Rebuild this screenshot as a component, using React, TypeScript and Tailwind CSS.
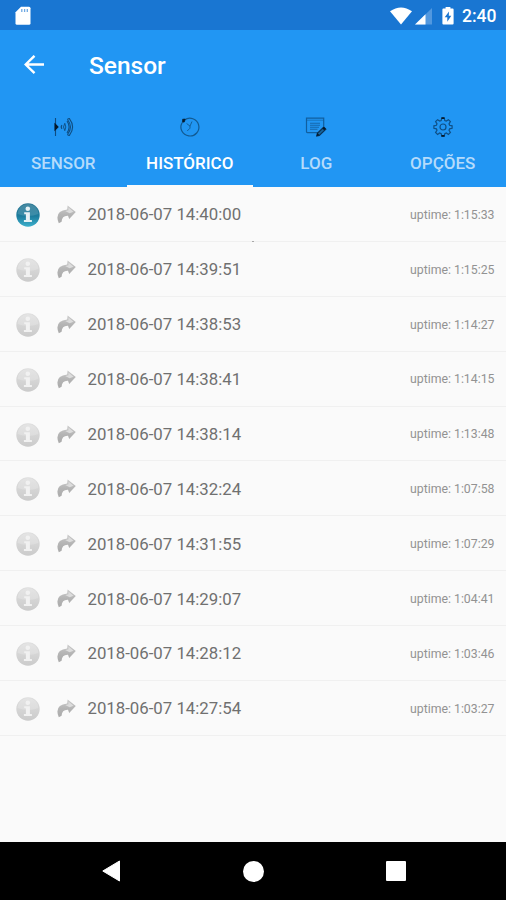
import { useState } from "react";
import type { ReactNode } from "react";

const records = [
  { date: "2018-06-07 14:40:00", uptime: "1:15:33" },
  { date: "2018-06-07 14:39:51", uptime: "1:15:25" },
  { date: "2018-06-07 14:38:53", uptime: "1:14:27" },
  { date: "2018-06-07 14:38:41", uptime: "1:14:15" },
  { date: "2018-06-07 14:38:14", uptime: "1:13:48" },
  { date: "2018-06-07 14:32:24", uptime: "1:07:58" },
  { date: "2018-06-07 14:31:55", uptime: "1:07:29" },
  { date: "2018-06-07 14:29:07", uptime: "1:04:41" },
  { date: "2018-06-07 14:28:12", uptime: "1:03:46" },
  { date: "2018-06-07 14:27:54", uptime: "1:03:27" },
];

const SensorIcon = () => (
  <svg width="22" height="22" viewBox="0 0 22 22" fill="none" stroke="#0f4d80" strokeWidth="1.1">
    <path d="M3.5 2v18" />
    <path d="M3 8l3 3-3 3z" fill="#05192b" stroke="#05192b" />
    <path d="M10 9.2q-1.6 1.8 0 3.6" />
    <path d="M12.8 7.3q-2.6 3.7 0 7.4M12.8 7.3q2 3.700 0 7.400" strokeWidth=".9" />
    <path d="M15 5q4.200 6 0 12" />
    <path d="M17.400 2.600q6.400 8.400 0 16.800q-2 .2-1.600-1.400q5.300-7 0-14q-.4-1.600 1.600-1.400z" />
  </svg>
);

const HistoryIcon = () => (
  <svg width="22" height="22" viewBox="0 0 22 22" fill="none" stroke="#125a92" strokeWidth="1.2">
    <path d="M5.5 4a9 8.9 0 1 1-2.4 2.7" />
    <path d="M3.6 3.2 6.2 3l-.8 3-2 .3z" fill="#05192b" stroke="#05192b" strokeWidth=".6" />
    <path d="m7.6 7.5 3.4 2.6 2-4.6M11 10v2.2L8.2 15" strokeWidth=".9" />
  </svg>
);

const LogIcon = () => (
  <svg width="22" height="22" viewBox="0 0 22 22" fill="none" stroke="#115f9f" strokeWidth="1.2">
    <path d="M13 16.6H2.5q-1 0-1-1V2.2h17.2v8.3" />
    <path d="M1.5 4.2h17.2" strokeWidth=".6" />
    <path d="M5 7.2h10M5 9.2h10M5 11.2h9M5 13.2h7.5" stroke="#1668ad" strokeWidth="1.1" />
    <path d="m12.4 17.2 6.4-6 2 2-6.5 6.2-2.5.6z" stroke="#0b3459" fill="#17679f" />
    <path d="m12.4 17-.9 3 3-.7zM17.3 12.2l1.8 2 1.7-1.4-1.9-1.8z" fill="#05192b" stroke="none" />
  </svg>
);

const GearIcon = () => (
  <svg width="22" height="22" viewBox="0 0 22 22" fill="none" stroke="#0f4f85" strokeWidth="1.2">
    <path d="M9.7 2h2.6l.5 2.5 1.5.6 2.1-1.4 2 2L17 7.8l.6 1.5 2.5.5v2.5l-2.5.5-.6 1.5 1.4 2.1-2 2-2.1-1.4-1.5.6-.5 2.5H9.7l-.5-2.5-1.5-.6-2.1 1.4-2-2L5 14.3l-.6-1.5-2.5-.5V9.8l2.5-.5L5 7.8 3.6 5.7l2-2 2.1 1.4 1.5-.6z" />
    <circle cx="11" cy="11" r="3" />
    <path d="M9.5 2.2h3M9.5 19.8h3" stroke="#05192b" strokeWidth="1.8" />
  </svg>
);

const tabs = [
  { label: "SENSOR", icon: <SensorIcon /> },
  { label: "HISTÓRICO", icon: <HistoryIcon /> },
  { label: "LOG", icon: <LogIcon /> },
  { label: "OPÇÕES", icon: <GearIcon /> },
];

function InfoIcon({ active }: { active: boolean }) {
  const id = active ? "info-on" : "info-off";
  return (
    <svg width="24" height="24" viewBox="0 0 24 24">
      <defs>
        <linearGradient id={id} x1="0" y1="0" x2="0" y2="1">
          <stop offset="0" stopColor={active ? "#2b7793" : "#dedede"} />
          <stop offset=".55" stopColor={active ? "#1c7c9d" : "#d4d4d4"} />
          <stop offset="1" stopColor={active ? "#3db0cc" : "#cbcbcb"} />
        </linearGradient>
      </defs>
      <circle cx="12" cy="12" r="11.7" fill={`url(#${id})`} />
      <path d="M1.5 11a10.5 10 0 0 1 21 0q-10.5 4-21 0z" fill="#fff" opacity={active ? 0.13 : 0.2} />
      <g fill={active ? "#e6f1f5" : "#f1f1f1"}>
        <circle cx="11.8" cy="5.8" r="2.3" />
        <path d="M8.2 9.2h5.7v7.8h2v2H7.9v-2h2v-5.8H8.2z" />
      </g>
    </svg>
  );
}

const ShareIcon = () => (
  <svg width="20" height="20" viewBox="0 0 20 20">
    <defs>
      <linearGradient id="share" x1="0" y1="0" x2="0" y2="1">
        <stop offset="0" stopColor="#cacaca" />
        <stop offset=".5" stopColor="#b5b5b5" />
        <stop offset="1" stopColor="#aaa" />
      </linearGradient>
    </defs>
    <path d="M11.6.4 19.8 7l-6.600 6.900-1.200-3.200Q5.800 10.400 5.600 16.800L2.800 18.200Q-2.300 6.200 11.200 4.500z" fill="url(#share)" />
    <path d="m12.400 2.600 5.200 4.200-4 1.500-4.400-2.300 3.200-.8z" fill="#dcdcdc" />
  </svg>
);

function StatusBar() {
  return (
    <div className="flex h-[30px] shrink-0 items-center bg-[#1976d2] pt-px pr-[9px] pl-[15px] text-white">
      <svg width="16" height="20" viewBox="0 0 16 20">
        <path d="M6 .8h8q1.5 0 1.5 1.5v15q0 1.5-1.5 1.5H2q-1.5 0-1.5-1.5v-11z" fill="#fff" />
        <path d="M6.8 3v3M9.6 3v3M12.3 3v3" stroke="#6fa9e3" strokeWidth="1.3" />
      </svg>
      <div className="ml-auto flex items-center">
        <svg width="24" height="20" viewBox="0 0 24 20">
          <path d="M1 5.3q11-7.6 22 0L12 18.5z" fill="#fff" />
        </svg>
        <svg className="ml-0.5" width="18" height="18" viewBox="0 0 18 18">
          <path d="M0 17.5 17 1v16.5z" fill="#5298df" />
          <path d="M0 17.5 10.5 7.3v10.2z" fill="#fff" />
        </svg>
        <svg className="ml-[9px]" width="12" height="20" viewBox="0 0 12 20">
          <path d="M3.6 1h4.8v1.6h2.2q1 0 1 1v14q0 1-1 1H1.4q-1 0-1-1v-14q0-1 1-1h2.2z" fill="#fff" />
          <path d="M7 5.5 2.7 11.2h2.6v4.5l4-6H6.8z" fill="#1976d2" />
        </svg>
        <span className="ml-2 w-[35px] pt-0.5 text-[17.5px] font-medium whitespace-nowrap">2:40</span>
      </div>
    </div>
  );
}

function Tab({ label, icon, selected, onClick }: { label: string; icon: ReactNode; selected: boolean; onClick: () => void }) {
  return (
    <button
      onClick={onClick}
      className={`flex flex-1 basis-0 flex-col items-center border-b-2 pt-[15.5px] text-[17px] font-medium ${
        selected ? "border-[#fafafa] text-white" : "border-transparent text-[#b5dbfb]"
      }`}
    >
      <span className="h-[22px]">{icon}</span>
      <span className="mt-[13.5px] leading-6">{label}</span>
    </button>
  );
}

export default function App() {
  const [selected, setSelected] = useState(1);

  return (
    <div className="flex h-[900px] w-[506px] flex-col overflow-hidden bg-[#fafafa] font-['Roboto',sans-serif]">
      <StatusBar />

      <header className="flex h-[157px] shrink-0 flex-col bg-[#2196f3]">
        <div className="flex h-[70px] items-center pl-[24px]">
          <svg width="21" height="20" viewBox="0 0 21 20" fill="none" stroke="#fff" strokeWidth="2.4">
            <path d="M20 9.5H2M10.5.8 1.7 9.5l8.8 8.7" />
          </svg>
          <h1 className="ml-[44px] pt-0.5 text-[24.5px] font-medium text-white">Sensor</h1>
        </div>
        <div className="flex flex-1">
          {tabs.map((tab, i) => (
            <Tab key={tab.label} {...tab} selected={i === selected} onClick={() => setSelected(i)} />
          ))}
        </div>
      </header>

      <ul className="flex-1">
        {records.map((record, i) => (
          <li
            key={record.date}
            className="relative flex h-[54.9px] items-center border-b border-[#f0f0f0] pt-[2px] pr-[11.5px] pl-[15.5px]"
          >
            <InfoIcon active={i === 0} />
            <span className="ml-4">
              <ShareIcon />
            </span>
            <span className="ml-[12px] text-[16.8px] text-[#707070]">{record.date}</span>
            <span className="ml-auto text-[12.3px] text-[#929292]">uptime: {record.uptime}</span>
            {i === 0 && <span className="absolute -bottom-px left-[252px] h-px w-0.5 bg-[#a8a8a8]" />}
          </li>
        ))}
      </ul>

      {/* Android navigation bar */}
      <nav className="flex h-[58px] shrink-0 items-center justify-between bg-black pr-[100px] pl-[102px]">
        <svg width="19" height="22" viewBox="0 0 19 22">
          <path d="M17.5 1v20L.8 11z" fill="#fff" stroke="#fff" strokeLinejoin="round" />
        </svg>
        <span className="size-[21px] rounded-full bg-white" />
        <span className="size-5 rounded-[1px] bg-white" />
      </nav>
    </div>
  );
}
